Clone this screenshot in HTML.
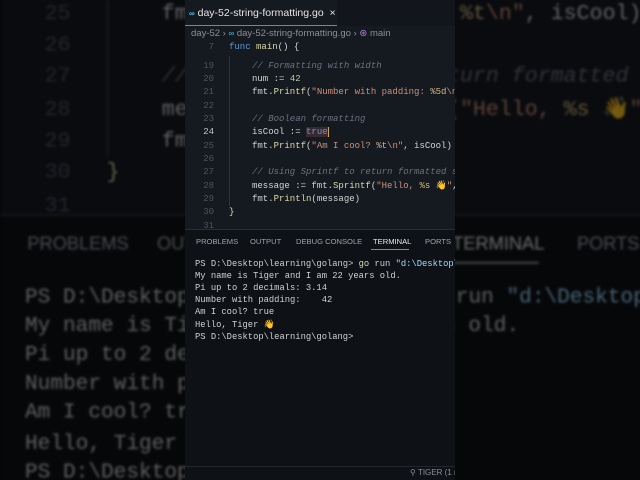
<!DOCTYPE html>
<html><head><meta charset="utf-8"><style>
*{margin:0;padding:0;box-sizing:border-box}
html,body{width:640px;height:480px;overflow:hidden;background:#0b0d11}
.mono{font-family:"Liberation Mono","DejaVu Sans Mono",monospace}
.sans{font-family:"Liberation Sans","DejaVu Sans",sans-serif}
.content{position:absolute;left:0;top:0;width:460px;height:480px;background:#151920;overflow:hidden}
.tabbar{position:absolute;left:0;top:0;width:460px;height:26px;background:#12151b}
.tab{position:absolute;left:0;top:0;width:152px;height:26px;background:#151920;border-bottom:1.5px solid #4a8fd8;color:#e6e6e6;font-size:10.5px;line-height:26px;padding-left:4px;white-space:nowrap}
.crumb{position:absolute;left:6px;top:28px;font-size:9.5px;color:#8a8f98;white-space:nowrap}
.ln{position:absolute;left:0;width:29px;text-align:right;font-size:9px;color:#4c5360}
.code{position:absolute;font-size:9px;color:#d4d4d4;white-space:pre}
.cm{color:#6b7280;font-style:italic}
.kw{color:#569cd6}.fn{color:#dcdcaa}.st{color:#ce9178}.nm{color:#b5cea8}.es{color:#d7ba7d}.vr{color:#9cdcfe}
.term{position:absolute;left:0;top:229px;width:460px;height:237px;background:#0e1116;border-top:1px solid #2a2e36;overflow:hidden}
.ttab{position:absolute;top:7px;font-size:7.6px;color:#a0a4ab;white-space:nowrap}
.tl{position:absolute;left:10px;font-size:8.8px;line-height:11px;color:#d0d0d0;white-space:pre}
.status{position:absolute;left:0;top:466px;width:460px;height:14px;background:#0e1116;border-top:1px solid #22262d}
</style></head><body>

<div style="position:absolute;left:0;top:0;width:640px;height:480px;overflow:hidden">
<div style="position:absolute;left:1px;top:-335.6px;transform:scale(2.4);transform-origin:0 0;filter:blur(0.6px)">
<div class="content">
 <div class="ln mono" style="top:141px">25</div><div class="code mono" style="left:67px;top:141px">fmt.<span class="fn">Printf</span>(<span class="st">"Am I cool? </span><span class="es">%t</span><span class="st">\n"</span>, isCool)</div>
 <div class="ln mono" style="top:154px">26</div>
 <div class="ln mono" style="top:167px">27</div><div class="code mono cm" style="left:67px;top:167px">// Using Sprintf to return formatted string</div>
 <div class="ln mono" style="top:181px">28</div><div class="code mono" style="left:67px;top:181px">message := fmt.<span class="fn">Sprintf</span>(<span class="st">"Hello, </span><span class="es">%s</span><span class="st"> 👋"</span>, name)</div>
 <div class="ln mono" style="top:194px">29</div><div class="code mono" style="left:67px;top:194px">fmt.<span class="fn">Println</span>(message)</div>
 <div class="ln mono" style="top:207px">30</div><div class="code mono fn" style="left:44px;top:207px">}</div>
 <div class="ln mono" style="top:221px">31</div>
 <div style="position:absolute;left:44px;top:140px;width:1px;height:65px;background:#333"></div>
 <div class="term">
  <div class="ttab sans" style="left:11px">PROBLEMS</div><div class="ttab sans" style="left:65px">OUTPUT</div><div class="ttab sans" style="left:111px">DEBUG CONSOLE</div><div class="ttab sans" style="left:188px;color:#e8e8e8">TERMINAL</div><div class="ttab sans" style="left:240px">PORTS</div>
  <div style="position:absolute;left:186px;top:19px;width:38px;height:1px;background:#888"></div>
  <div class="tl mono" style="top:29px">PS D:\Desktop\learning\golang&gt; <span class="fn">go</span> run <span class="vr">"d:\Desktop\learning\golang\day-52.go"</span></div>
  <div class="tl mono" style="top:41px">My name is Tiger and I am 22 years old.</div>
  <div class="tl mono" style="top:53px">Pi up to 2 decimals: 3.14</div>
  <div class="tl mono" style="top:65px">Number with padding:    42</div>
  <div class="tl mono" style="top:77px">Am I cool? true</div>
  <div class="tl mono" style="top:90px">Hello, Tiger 👋</div>
  <div class="tl mono" style="top:102px">PS D:\Desktop\learning\golang&gt;</div>
 </div>
</div>
</div>
<div style="position:absolute;left:0;top:0;width:640px;height:480px;background:rgba(0,0,0,0.55)"></div>
</div>

<div style="position:absolute;left:185px;top:0;width:270px;height:480px;overflow:hidden">
<div class="content">
 <div class="tabbar"></div>
 <div class="tab sans"><span style="color:#4fc1e9;font-size:8px;font-weight:bold">∞</span> day-52-string-formatting.go&nbsp;&nbsp;×</div>
 <div class="crumb sans">day-52 › <span style="color:#4fc1e9;font-size:8px">∞</span> day-52-string-formatting.go › <span style="color:#b180d7">⊛</span> main</div>
 <div class="ln mono" style="top:42px">7</div><div class="code mono" style="left:44px;top:42px"><span class="kw">func</span> <span class="fn">main</span>() {</div>
 <div style="position:absolute;left:44px;top:56px;width:1px;height:150px;background:#333"></div>
 <div class="ln mono" style="top:61px">19</div><div class="code mono cm" style="left:67px;top:61px">// Formatting with width</div>
 <div class="ln mono" style="top:74px">20</div><div class="code mono" style="left:67px;top:74px">num := <span class="nm">42</span></div>
 <div class="ln mono" style="top:87px">21</div><div class="code mono" style="left:67px;top:87px">fmt.<span class="fn">Printf</span>(<span class="st">"Number with padding: </span><span class="es">%5d</span><span class="st">\n"</span>, num)</div>
 <div class="ln mono" style="top:101px">22</div>
 <div class="ln mono" style="top:114px">23</div><div class="code mono cm" style="left:67px;top:114px">// Boolean formatting</div>
 <div class="ln mono" style="top:127px;color:#c6c6c6">24</div><div class="code mono" style="left:67px;top:127px">isCool := <span class="kw" style="background:#3a2a30">true</span><span style="border-left:1px solid #e0a040"></span></div>
 <div class="ln mono" style="top:141px">25</div><div class="code mono" style="left:67px;top:141px">fmt.<span class="fn">Printf</span>(<span class="st">"Am I cool? </span><span class="es">%t</span><span class="st">\n"</span>, isCool)</div>
 <div class="ln mono" style="top:154px">26</div>
 <div class="ln mono" style="top:167px">27</div><div class="code mono cm" style="left:67px;top:167px">// Using Sprintf to return formatted string</div>
 <div class="ln mono" style="top:181px">28</div><div class="code mono" style="left:67px;top:181px">message := fmt.<span class="fn">Sprintf</span>(<span class="st">"Hello, </span><span class="es">%s</span><span class="st"> 👋"</span>, name)</div>
 <div class="ln mono" style="top:194px">29</div><div class="code mono" style="left:67px;top:194px">fmt.<span class="fn">Println</span>(message)</div>
 <div class="ln mono" style="top:207px">30</div><div class="code mono fn" style="left:44px;top:207px">}</div>
 <div class="ln mono" style="top:221px">31</div>
 <div class="term">
  <div class="ttab sans" style="left:11px">PROBLEMS</div><div class="ttab sans" style="left:65px">OUTPUT</div><div class="ttab sans" style="left:111px">DEBUG CONSOLE</div><div class="ttab sans" style="left:188px;color:#e8e8e8">TERMINAL</div><div class="ttab sans" style="left:240px">PORTS</div>
  <div style="position:absolute;left:186px;top:19px;width:38px;height:1px;background:#888"></div>
  <div class="tl mono" style="top:29px">PS D:\Desktop\learning\golang&gt; <span class="fn">go</span> run <span class="vr">"d:\Desktop\learning\golang\day-52.go"</span></div>
  <div class="tl mono" style="top:41px">My name is Tiger and I am 22 years old.</div>
  <div class="tl mono" style="top:53px">Pi up to 2 decimals: 3.14</div>
  <div class="tl mono" style="top:65px">Number with padding:    42</div>
  <div class="tl mono" style="top:77px">Am I cool? true</div>
  <div class="tl mono" style="top:90px">Hello, Tiger 👋</div>
  <div class="tl mono" style="top:102px">PS D:\Desktop\learning\golang&gt;</div>
 </div>
 <div class="status"><div class="sans" style="position:absolute;left:225px;top:1px;font-size:8px;line-height:10px;color:#8a8f98;white-space:nowrap">⚲ TIGER (1 ms)</div></div>
</div>
</div>
</body></html>
